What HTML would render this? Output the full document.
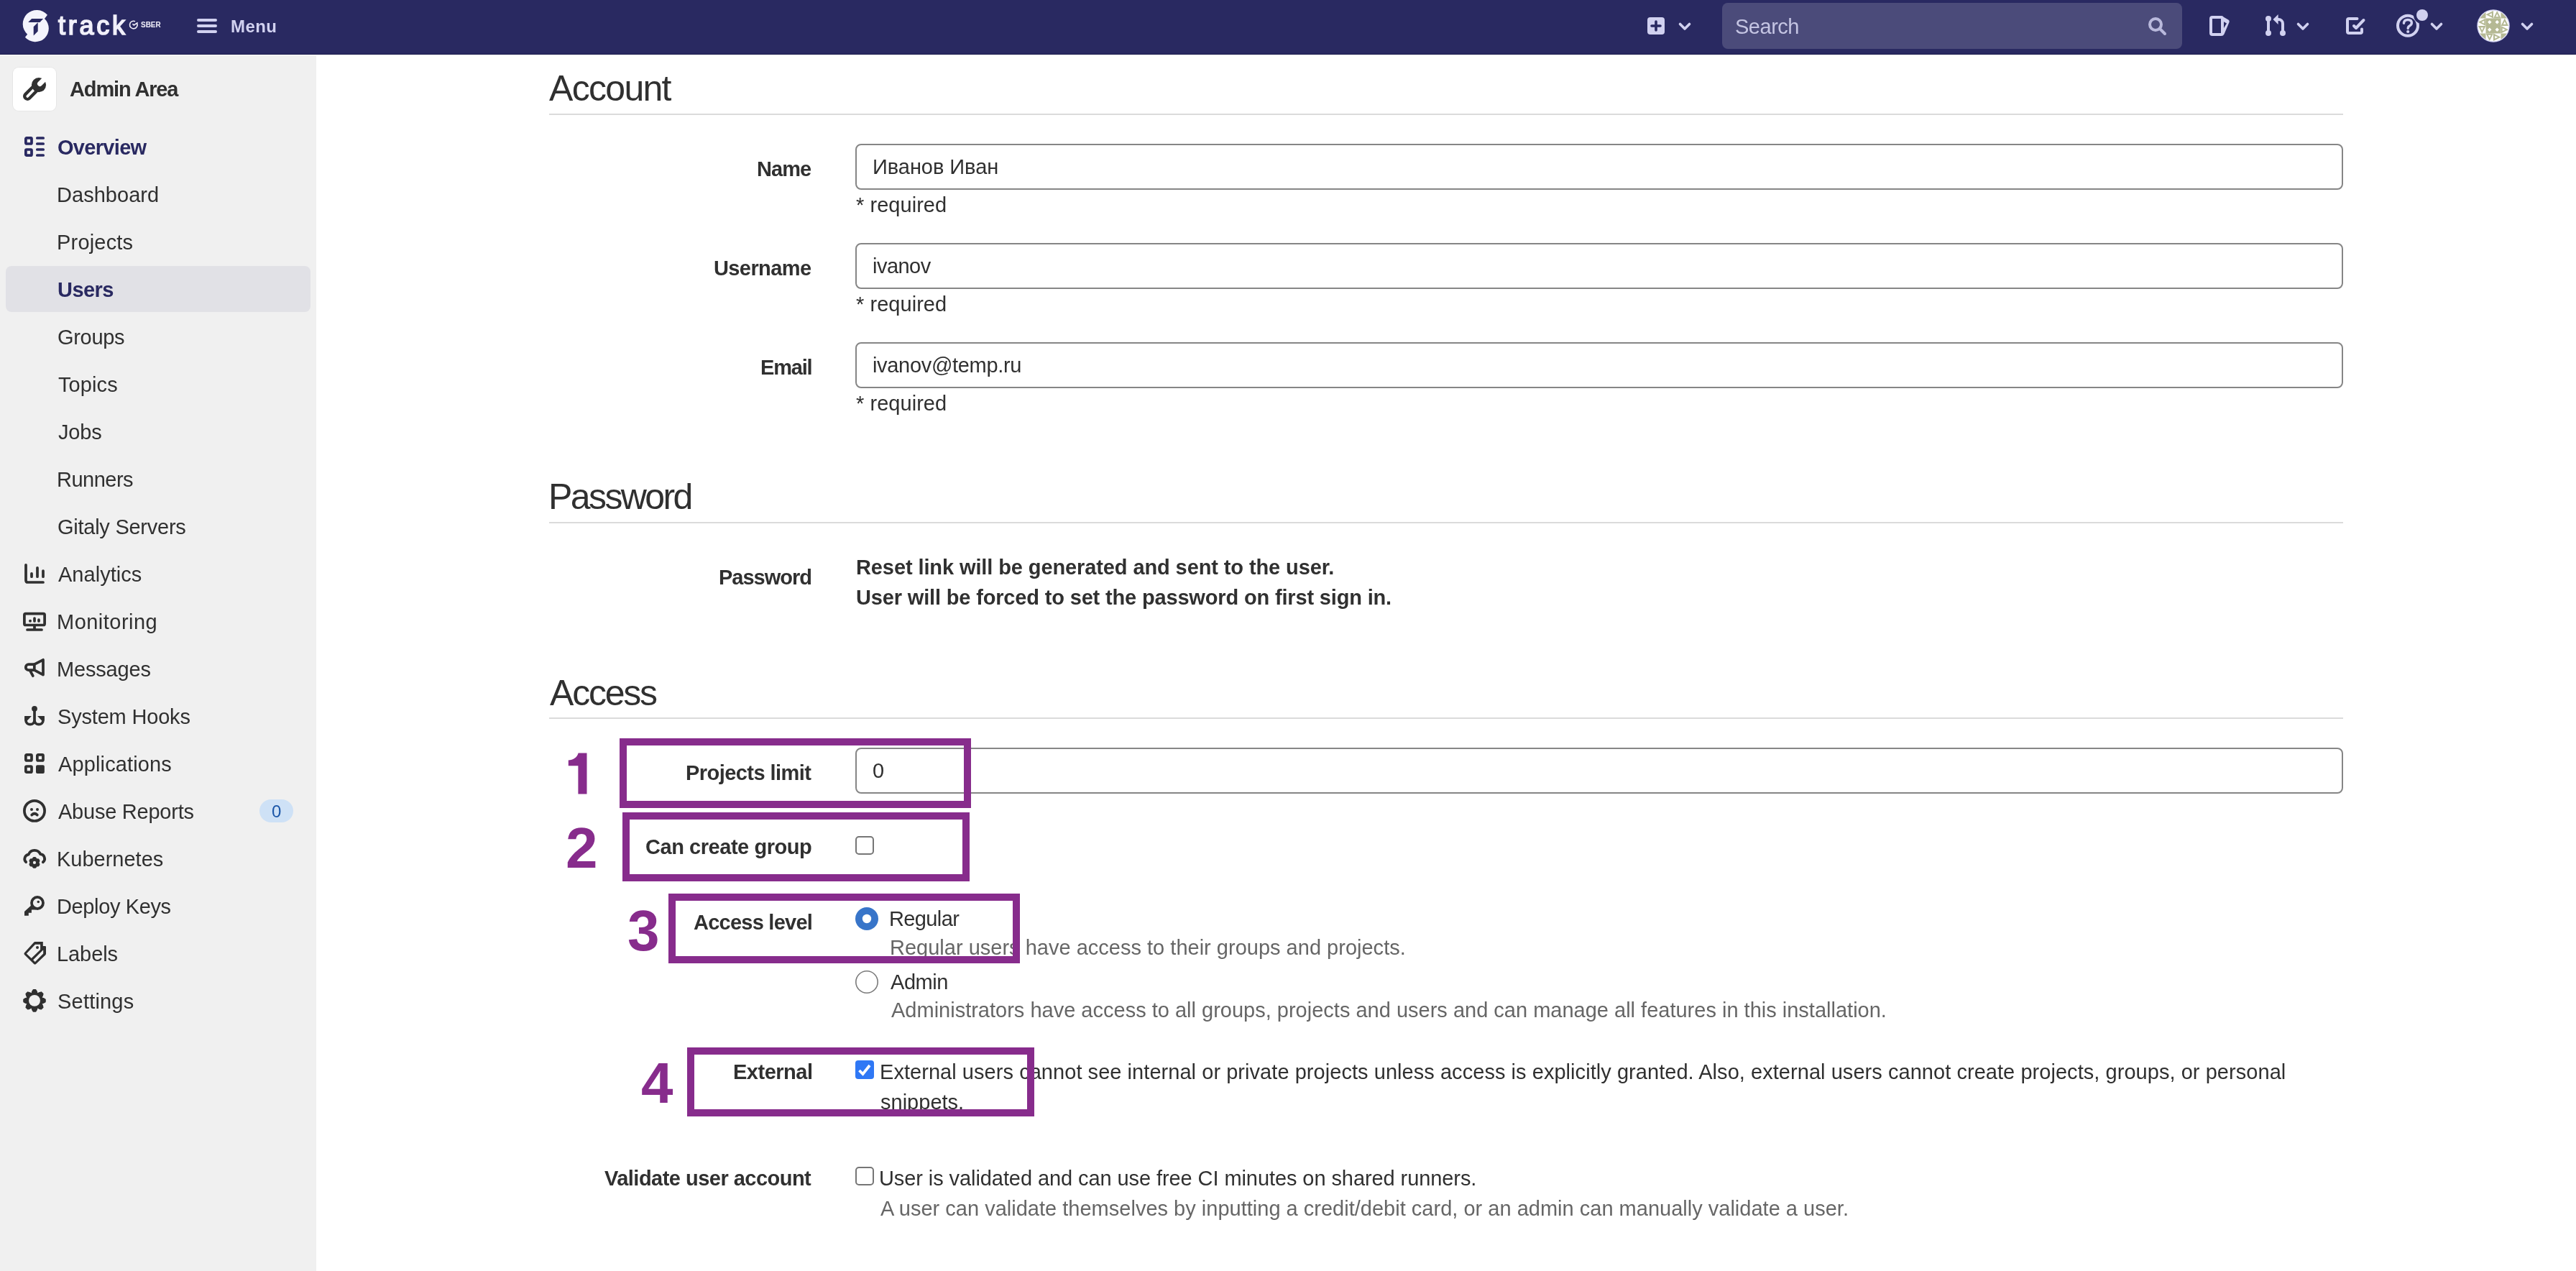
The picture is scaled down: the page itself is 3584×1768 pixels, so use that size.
<!DOCTYPE html>
<html><head><meta charset="utf-8"><title>Admin Area</title>
<style>
html,body{margin:0;padding:0;width:3584px;height:1768px;overflow:hidden;background:#fff;}
body{position:relative;font-family:"Liberation Sans", sans-serif;}
.t{position:absolute;white-space:nowrap;will-change:transform;}
svg{display:block;overflow:visible;}
</style></head><body>
<div style="position:absolute;left:0px;top:0px;width:3584px;height:76px;background:#292961;"></div>
<div style="position:absolute;left:0px;top:75px;width:3584px;height:1px;background:#1b1b4c;"></div>
<svg style="position:absolute;left:26px;top:8px" width="50" height="56" viewBox="0 0 50 56">
<path fill="#f4f4fc" d="M39.96 12.83 A19.4 19.4 0 1 0 12.12 39.72 L8.9 43.7 A18.7 18.7 0 1 0 36.0 18.0 Z"/>
<path fill="#292961" d="M13.2 22.9 L18.1 18.1 H34.1 L29.5 22.9 Z M20.7 29.3 L26.7 23.3 V35.5 L20.7 41.5 Z"/>
</svg>
<div class="t" style="left:80.80px;top:17.62px;font-size:36px;line-height:36px;font-weight:400;color:#f1f0fa;letter-spacing:3.747px;-webkit-text-stroke:1.7px #f1f0fa;">track</div>
<svg style="position:absolute;left:178.5px;top:27.6px" width="13" height="13" viewBox="0 0 13 13"><path d="M11.61 4.3 A5.3 5.3 0 1 1 9.0 1.7" fill="none" stroke="#f1f0fa" stroke-width="1.6"/><path d="M5.4 5.3 L7.4 6.9 L12.6 3.4" fill="none" stroke="#f1f0fa" stroke-width="1.6"/></svg>
<div class="t" style="left:195.60px;top:30.33px;font-size:10px;line-height:10px;font-weight:700;color:#f1f0fa;letter-spacing:-0.021px;">SBER</div>
<div style="position:absolute;left:274px;top:26px;width:28px;height:4px;background:#d1d1f0;border-radius:2px;"></div>
<div style="position:absolute;left:274px;top:34px;width:28px;height:4px;background:#d1d1f0;border-radius:2px;"></div>
<div style="position:absolute;left:274px;top:42px;width:28px;height:4px;background:#d1d1f0;border-radius:2px;"></div>
<div class="t" style="left:320.70px;top:25.48px;font-size:24px;line-height:24px;font-weight:700;color:#d1d1f0;letter-spacing:0.400px;">Menu</div>
<svg style="position:absolute;left:2292px;top:24px" width="24" height="24" viewBox="0 0 24 24"><rect x="0" y="0" width="24" height="24" rx="4" fill="#d1d1f0"/><path d="M12 6 V18 M6 12 H18" stroke="#292961" stroke-width="3.6" stroke-linecap="round"/></svg>
<svg style="position:absolute;left:2335px;top:31px" width="18" height="12" viewBox="0 0 18 12"><path d="M2.5 2.5 L9 9 L15.5 2.5" fill="none" stroke="#d1d1f0" stroke-width="3.6" stroke-linecap="round" stroke-linejoin="round"/></svg>
<div style="position:absolute;left:2396px;top:4px;width:640px;height:64px;background:rgba(255,255,255,0.16);border-radius:8px;"></div>
<div class="t" style="left:2413.90px;top:23.45px;font-size:29px;line-height:29px;font-weight:400;color:#c5c5e3;letter-spacing:-0.491px;">Search</div>
<svg style="position:absolute;left:2988px;top:23px" width="28" height="28" viewBox="0 0 28 28"><circle cx="11" cy="11" r="8" fill="none" stroke="#b9b9dc" stroke-width="4"/><path d="M17 17 L24 24" stroke="#b9b9dc" stroke-width="4" stroke-linecap="round"/></svg>
<svg style="position:absolute;left:3074px;top:22px" width="28" height="28" viewBox="0 0 28 28"><path fill-rule="evenodd" fill="#d1d1f0" d="M4 0 H17 Q18.8 0 19.8 1.8 L26.3 5.6 Q28.5 7 27.3 9.5 L20.5 25.5 Q19.3 28 16.5 28 H4 Q0 28 0 24 V4 Q0 0 4 0 Z M4 4 V24 H16 V4 Z M20 8.3 V17 L24 10.5 Z"/></svg>
<svg style="position:absolute;left:3150px;top:19px" width="32" height="32" viewBox="0 0 32 32"><g fill="#d1d1f0"><circle cx="6" cy="7" r="4"/><circle cx="6" cy="27" r="4"/><rect x="4" y="7" width="4" height="20"/><circle cx="26" cy="27" r="4"/><polygon points="12.5,8 19.6,1 19.6,15"/></g>
<path d="M26 27 V14 A6 6 0 0 0 20 8 H18" fill="none" stroke="#d1d1f0" stroke-width="4"/></svg>
<svg style="position:absolute;left:3195px;top:31px" width="18" height="12" viewBox="0 0 18 12"><path d="M2.5 2.5 L9 9 L15.5 2.5" fill="none" stroke="#d1d1f0" stroke-width="3.6" stroke-linecap="round" stroke-linejoin="round"/></svg>
<svg style="position:absolute;left:3264px;top:24px" width="28" height="25" viewBox="0 0 28 25"><path d="M15.5 2 H4 Q2 2 2 4 V20 Q2 22 4 22 H20 Q22 22 22 20 V16.4" fill="none" stroke="#d1d1f0" stroke-width="4" stroke-linecap="round"/><path d="M11 12 L14 15 L24.5 4" fill="none" stroke="#d1d1f0" stroke-width="4" stroke-linecap="round" stroke-linejoin="round"/></svg>
<svg style="position:absolute;left:3332px;top:11px" width="50" height="44" viewBox="0 0 50 44"><defs><mask id="hm"><rect width="50" height="44" fill="#fff"/><circle cx="38" cy="10" r="12" fill="#000"/></mask></defs>
<g mask="url(#hm)"><circle cx="18" cy="24.8" r="14" fill="none" stroke="#d1d1f0" stroke-width="4"/>
<path d="M12.4 21.2 Q12.9 16.5 18 16.5 Q23.4 16.5 23.4 20.8 Q23.4 23.2 20.8 24.8 Q18.2 26.3 18.2 28.6" fill="none" stroke="#d1d1f0" stroke-width="3.4" stroke-linecap="round"/>
<circle cx="18.2" cy="33" r="2.1" fill="#d1d1f0"/></g>
<circle cx="38" cy="10" r="8" fill="#d1d1f0"/></svg>
<svg style="position:absolute;left:3381px;top:31px" width="18" height="12" viewBox="0 0 18 12"><path d="M2.5 2.5 L9 9 L15.5 2.5" fill="none" stroke="#d1d1f0" stroke-width="3.6" stroke-linecap="round" stroke-linejoin="round"/></svg>
<svg style="position:absolute;left:3446px;top:13px" width="46" height="46" viewBox="0 0 46 46"><defs><clipPath id="av"><circle cx="23" cy="23" r="21.3"/></clipPath></defs>
<circle cx="23" cy="23" r="22.7" fill="#d4d4f2"/>
<g clip-path="url(#av)"><rect width="46" height="46" fill="#fff"/><rect x="2" y="2" width="10.5" height="10.5" fill="#b5b994"/><rect x="33.5" y="2" width="10.5" height="10.5" fill="#b5b994"/><rect x="2" y="33.5" width="10.5" height="10.5" fill="#b5b994"/><rect x="33.5" y="33.5" width="10.5" height="10.5" fill="#b5b994"/><rect x="12.5" y="12.5" width="21" height="21" fill="#b5b994"/><polygon points="12.50,7.25 23.00,2.00 23.00,12.50" fill="#b5b994"/><polygon points="16.84,7.25 20.83,5.25 20.83,9.25" fill="#fff"/><polygon points="28.25,2.00 23.00,12.50 33.50,12.50" fill="#b5b994"/><polygon points="28.25,6.34 26.25,10.33 30.25,10.33" fill="#fff"/><polygon points="2.00,17.75 12.50,12.50 12.50,23.00" fill="#b5b994"/><polygon points="6.34,17.75 10.33,15.75 10.33,19.75" fill="#fff"/><polygon points="38.75,12.50 33.50,23.00 44.00,23.00" fill="#b5b994"/><polygon points="38.75,16.84 36.76,20.83 40.74,20.83" fill="#fff"/><polygon points="7.25,33.50 2.00,23.00 12.50,23.00" fill="#b5b994"/><polygon points="7.25,29.16 5.25,25.17 9.25,25.17" fill="#fff"/><polygon points="44.00,28.25 33.50,23.00 33.50,33.50" fill="#b5b994"/><polygon points="39.66,28.25 35.67,26.25 35.67,30.25" fill="#fff"/><polygon points="17.75,44.00 12.50,33.50 23.00,33.50" fill="#b5b994"/><polygon points="17.75,39.66 15.75,35.67 19.75,35.67" fill="#fff"/><polygon points="33.50,38.75 23.00,33.50 23.00,44.00" fill="#b5b994"/><polygon points="29.16,38.75 25.17,36.76 25.17,40.74" fill="#fff"/><polygon points="3.05,3.05 10.40,3.05 3.05,10.40" fill="#fff"/><polygon points="42.95,3.05 42.95,10.40 35.60,3.05" fill="#fff"/><polygon points="3.05,42.95 3.05,35.60 10.40,42.95" fill="#fff"/><polygon points="42.95,42.95 35.60,42.95 42.95,35.60" fill="#fff"/><rect x="15.85" y="15.85" width="3.8" height="3.8" fill="#fff" transform="rotate(45 17.75 17.75)"/><rect x="26.35" y="15.85" width="3.8" height="3.8" fill="#fff" transform="rotate(45 28.25 17.75)"/><rect x="15.85" y="26.35" width="3.8" height="3.8" fill="#fff" transform="rotate(45 17.75 28.25)"/><rect x="26.35" y="26.35" width="3.8" height="3.8" fill="#fff" transform="rotate(45 28.25 28.25)"/></g></svg>
<svg style="position:absolute;left:3507px;top:31px" width="18" height="12" viewBox="0 0 18 12"><path d="M2.5 2.5 L9 9 L15.5 2.5" fill="none" stroke="#d1d1f0" stroke-width="3.6" stroke-linecap="round" stroke-linejoin="round"/></svg>
<div style="position:absolute;left:0px;top:76px;width:440px;height:1px;background:#fdfdfd;"></div>
<div style="position:absolute;left:0px;top:77px;width:440px;height:1691px;background:#f0f0f0;"></div>
<div style="position:absolute;left:18px;top:94px;width:60px;height:60px;background:#fff;border-radius:8px;box-shadow:0 0 0 1px rgba(0,0,0,0.04);"></div>
<svg style="position:absolute;left:32px;top:108px" width="32" height="32" viewBox="0 0 32 32"><path d="M6.1 25.8 L19 13" stroke="#303030" stroke-width="12.2" stroke-linecap="round"/>
<path d="M6.2 26 L17.8 14" stroke="#fff" stroke-width="3.6" stroke-linecap="round"/>
<circle cx="22" cy="10.1" r="10.1" fill="#303030"/>
<path d="M23.5 8.5 L34 -2" stroke="#fff" stroke-width="7" stroke-linecap="round"/></svg>
<div class="t" style="left:96.60px;top:110.25px;font-size:29px;line-height:29px;font-weight:700;color:#303030;letter-spacing:-1.136px;">Admin Area</div>
<div style="position:absolute;left:8px;top:370px;width:424px;height:64px;background:#e1e1e6;border-radius:8px;"></div>
<div class="t" style="left:80.00px;top:190.75px;font-size:29px;line-height:29px;font-weight:700;color:#292961;letter-spacing:-0.688px;">Overview</div>
<div class="t" style="left:79.00px;top:256.75px;font-size:29px;line-height:29px;font-weight:400;color:#303030;letter-spacing:0.032px;">Dashboard</div>
<div class="t" style="left:79.00px;top:322.75px;font-size:29px;line-height:29px;font-weight:400;color:#303030;letter-spacing:0.192px;">Projects</div>
<div class="t" style="left:80.00px;top:388.75px;font-size:29px;line-height:29px;font-weight:700;color:#292961;letter-spacing:-0.546px;">Users</div>
<div class="t" style="left:80.00px;top:454.75px;font-size:29px;line-height:29px;font-weight:400;color:#303030;letter-spacing:-0.320px;">Groups</div>
<div class="t" style="left:81.00px;top:520.75px;font-size:29px;line-height:29px;font-weight:400;color:#303030;letter-spacing:0.100px;">Topics</div>
<div class="t" style="left:81.00px;top:586.75px;font-size:29px;line-height:29px;font-weight:400;color:#303030;letter-spacing:-0.186px;">Jobs</div>
<div class="t" style="left:79.00px;top:652.75px;font-size:29px;line-height:29px;font-weight:400;color:#303030;letter-spacing:-0.502px;">Runners</div>
<div class="t" style="left:80.00px;top:718.75px;font-size:29px;line-height:29px;font-weight:400;color:#303030;letter-spacing:-0.254px;">Gitaly Servers</div>
<div class="t" style="left:81.00px;top:784.75px;font-size:29px;line-height:29px;font-weight:400;color:#303030;letter-spacing:0.032px;">Analytics</div>
<div class="t" style="left:79.00px;top:850.75px;font-size:29px;line-height:29px;font-weight:400;color:#303030;letter-spacing:0.481px;">Monitoring</div>
<div class="t" style="left:79.00px;top:916.75px;font-size:29px;line-height:29px;font-weight:400;color:#303030;letter-spacing:-0.167px;">Messages</div>
<div class="t" style="left:80.00px;top:982.75px;font-size:29px;line-height:29px;font-weight:400;color:#303030;letter-spacing:-0.186px;">System Hooks</div>
<div class="t" style="left:81.00px;top:1048.75px;font-size:29px;line-height:29px;font-weight:400;color:#303030;letter-spacing:0.130px;">Applications</div>
<div class="t" style="left:81.00px;top:1114.75px;font-size:29px;line-height:29px;font-weight:400;color:#303030;letter-spacing:-0.236px;">Abuse Reports</div>
<div class="t" style="left:79.00px;top:1180.75px;font-size:29px;line-height:29px;font-weight:400;color:#303030;letter-spacing:-0.003px;">Kubernetes</div>
<div class="t" style="left:79.00px;top:1246.75px;font-size:29px;line-height:29px;font-weight:400;color:#303030;letter-spacing:-0.370px;">Deploy Keys</div>
<div class="t" style="left:79.00px;top:1312.75px;font-size:29px;line-height:29px;font-weight:400;color:#303030;letter-spacing:-0.071px;">Labels</div>
<div class="t" style="left:80.00px;top:1378.75px;font-size:29px;line-height:29px;font-weight:400;color:#303030;letter-spacing:0.202px;">Settings</div>
<svg style="position:absolute;left:32px;top:188.0px" width="32" height="32" viewBox="0 0 16 16"><rect x="1.93" y="1.93" width="4.07" height="4.07" rx="0.6" fill="none" stroke="#292961" stroke-width="1.87" stroke-linecap="round" stroke-linejoin="round"/><rect x="1.93" y="10" width="4.07" height="4.07" rx="0.6" fill="none" stroke="#292961" stroke-width="1.87" stroke-linecap="round" stroke-linejoin="round"/>
<path d="M9.9 2 H14.1 M9.9 6 H14.1 M9.9 10 H14.1 M9.9 14 H14.1" fill="none" stroke="#292961" stroke-width="1.87" stroke-linecap="round" stroke-linejoin="round"/></svg>
<svg style="position:absolute;left:32px;top:782.0px" width="32" height="32" viewBox="0 0 16 16"><path d="M2 1.9 V12.6 Q2 14 3.4 14 H14" fill="none" stroke="#303030" stroke-width="1.87" stroke-linecap="round" stroke-linejoin="round"/><path d="M6 7.9 V10.1 M10 3.9 V10.1 M14 6 V10.1" fill="none" stroke="#303030" stroke-width="1.87" stroke-linecap="round" stroke-linejoin="round"/></svg>
<svg style="position:absolute;left:32px;top:848.0px" width="32" height="32" viewBox="0 0 16 16"><rect x="0.95" y="2.85" width="14.1" height="7.9" rx="0.9" fill="none" stroke="#303030" stroke-width="1.87" stroke-linecap="round" stroke-linejoin="round"/><path d="M8 10.8 V13.5 M3 14 H13" fill="none" stroke="#303030" stroke-width="1.87" stroke-linecap="round" stroke-linejoin="round"/>
<circle cx="5" cy="7.9" r="1" fill="#303030"/><path d="M8 6.1 V8 M11 7.1 V8" fill="none" stroke="#303030" stroke-width="1.87" stroke-linecap="round" stroke-linejoin="round"/></svg>
<svg style="position:absolute;left:32px;top:914.0px" width="32" height="32" viewBox="0 0 16 16"><path d="M7.9 5.1 L14 1.9 V12.3 L7.9 9.1 Z" fill="none" stroke="#303030" stroke-width="1.87" stroke-linecap="round" stroke-linejoin="round"/><path d="M7.9 5.1 H3.9 A2 2 0 0 0 3.9 9.1 H7.9" fill="none" stroke="#303030" stroke-width="1.87" stroke-linecap="round" stroke-linejoin="round"/><path d="M5 9.6 L6.9 13.1" fill="none" stroke="#303030" stroke-width="1.87" stroke-linecap="round" stroke-linejoin="round"/></svg>
<svg style="position:absolute;left:32px;top:980.0px" width="32" height="32" viewBox="0 0 16 16"><circle cx="8" cy="2.9" r="1.95" fill="#303030"/><path d="M8 3 V13" fill="none" stroke="#303030" stroke-width="1.87"/>
<path d="M1.97 8.2 V11 A3.02 3.02 0 0 0 8 11 A3.02 3.02 0 0 0 14.03 11 V8.2" fill="none" stroke="#303030" stroke-width="1.87"/>
<path d="M1 8 H5.95 L2.9 11.2 Z M15 8 H10.05 L13.1 11.2 Z" fill="#303030"/></svg>
<svg style="position:absolute;left:32px;top:1046.0px" width="32" height="32" viewBox="0 0 16 16"><rect x="1.93" y="1.93" width="4.07" height="4.07" rx="0.6" fill="none" stroke="#303030" stroke-width="1.87" stroke-linecap="round" stroke-linejoin="round"/><rect x="9.93" y="1.93" width="4.07" height="4.07" rx="0.6" fill="none" stroke="#303030" stroke-width="1.87" stroke-linecap="round" stroke-linejoin="round"/>
<rect x="1.93" y="10" width="4.07" height="4.07" rx="0.6" fill="none" stroke="#303030" stroke-width="1.87" stroke-linecap="round" stroke-linejoin="round"/><rect x="9" y="9.07" width="5.93" height="5.93" rx="1" fill="#303030"/></svg>
<svg style="position:absolute;left:32px;top:1112.0px" width="32" height="32" viewBox="0 0 16 16"><circle cx="8" cy="7.95" r="7.05" fill="none" stroke="#303030" stroke-width="1.87" stroke-linecap="round" stroke-linejoin="round"/><circle cx="6" cy="7" r="1" fill="#303030"/><circle cx="10" cy="7" r="1" fill="#303030"/>
<path d="M6.1 10.8 Q8 8.9 9.9 10.8" fill="none" stroke="#303030" stroke-width="1.87" stroke-linecap="round" stroke-linejoin="round"/></svg>
<svg style="position:absolute;left:32px;top:1178.0px" width="32" height="32" viewBox="0 0 16 16"><path d="M2.1 10.6 A3.1 3.1 0 0 1 3.9 5.3 A4.4 4.4 0 0 1 12.1 5.1 A3.1 3.1 0 0 1 13.9 10.6" fill="none" stroke="#303030" stroke-width="1.87" stroke-linecap="round" stroke-linejoin="round"/><circle cx="7.98" cy="10.95" r="2.75" fill="#303030"/><path d="M6.780 8.950 L6.930 8.050 L7.480 7.500 L8.480 7.500 L9.030 8.050 L9.180 8.950 Z M9.112 8.911 L9.966 8.591 L10.718 8.792 L11.218 9.658 L11.016 10.409 L10.312 10.989 Z M10.312 10.911 L11.016 11.491 L11.218 12.242 L10.718 13.108 L9.966 13.309 L9.112 12.989 Z M9.180 12.950 L9.030 13.850 L8.480 14.400 L7.480 14.400 L6.930 13.850 L6.780 12.950 Z M6.848 12.989 L5.994 13.309 L5.242 13.108 L4.742 12.242 L4.944 11.491 L5.648 10.911 Z M5.648 10.989 L4.944 10.409 L4.742 9.658 L5.242 8.792 L5.994 8.591 L6.848 8.911 Z" fill="#303030" stroke="#303030" stroke-width="1" stroke-linejoin="round"/><circle cx="7.98" cy="10.95" r="1.05" fill="#f0f0f0"/></svg>
<svg style="position:absolute;left:32px;top:1244.0px" width="32" height="32" viewBox="0 0 16 16"><circle cx="10" cy="6" r="4.02" fill="none" stroke="#303030" stroke-width="1.87" stroke-linecap="round" stroke-linejoin="round"/><circle cx="10.65" cy="5.25" r="0.9" fill="#303030"/>
<path fill="#303030" d="M6.2 7.2 L1 12 V14.9 H3.9 V12.9 H5.95 V10.8 H9 L8 9 Z"/></svg>
<svg style="position:absolute;left:32px;top:1310.0px" width="32" height="32" viewBox="0 0 16 16"><path fill="#303030" fill-rule="evenodd" d="M8.3 0 H13.9 V3 H15.4 Q16 3 16 3.6 V8.2 Q16 8.8 15.6 9.2 L9 15.5 Q8.3 16.1 7.6 15.5 L1 9 Q0.4 8.3 1 7.6 L7.6 0.4 Q8 0 8.3 0 Z M8.5 1.85 L2.45 8.3 L5.85 11.55 L12.05 5.45 V1.85 Z M13.85 5.9 L7.05 12.65 L8.4 14 L14.1 8.3 V5.9 Z"/>
<circle cx="10" cy="3.97" r="1" fill="#303030"/></svg>
<svg style="position:absolute;left:32px;top:1376.0px" width="32" height="32" viewBox="0 0 16 16"><circle cx="8" cy="7.95" r="5.85" fill="#303030"/><path d="M6.450 2.950 L6.600 1.850 L7.280 0.650 L8.720 0.650 L9.400 1.850 L9.550 2.950 Z M10.440 3.318 L11.323 2.647 L12.653 2.279 L13.671 3.297 L13.303 4.627 L12.632 5.510 Z M13.000 6.400 L14.100 6.550 L15.300 7.230 L15.300 8.670 L14.100 9.350 L13.000 9.500 Z M12.632 10.390 L13.303 11.273 L13.671 12.603 L12.653 13.621 L11.323 13.253 L10.440 12.582 Z M9.550 12.950 L9.400 14.050 L8.720 15.250 L7.280 15.250 L6.600 14.050 L6.450 12.950 Z M5.560 12.582 L4.677 13.253 L3.347 13.621 L2.329 12.603 L2.697 11.273 L3.368 10.390 Z M3.000 9.500 L1.900 9.350 L0.700 8.670 L0.700 7.230 L1.900 6.550 L3.000 6.400 Z M3.368 5.510 L2.697 4.627 L2.329 3.297 L3.347 2.279 L4.677 2.647 L5.560 3.318 Z" fill="#303030" stroke="#303030" stroke-width="1.2" stroke-linejoin="round"/><circle cx="8" cy="7.95" r="3.98" fill="#f0f0f0"/></svg>
<div style="position:absolute;left:361px;top:1112px;width:47px;height:32px;background:#cee1f6;border-radius:16px;"></div>
<div class="t" style="left:378.40px;top:1116.88px;font-size:24px;line-height:24px;font-weight:400;color:#1c57a8;letter-spacing:0.000px;">0</div>
<div class="t" style="left:764.40px;top:98.16px;font-size:50px;line-height:50px;font-weight:400;color:#303030;letter-spacing:-1.695px;">Account</div>
<div style="position:absolute;left:764px;top:158px;width:2496px;height:2px;background:#dbdbdb;"></div>
<div class="t" style="left:1052.90px;top:221.15px;font-size:29px;line-height:29px;font-weight:700;color:#303030;letter-spacing:-0.919px;">Name</div>
<div style="position:absolute;left:1190px;top:200px;width:2070px;height:64px;box-sizing:border-box;border:2px solid #868686;border-radius:8px;background:#fff;"></div>
<div class="t" style="left:1213.60px;top:218.15px;font-size:29px;line-height:29px;font-weight:400;color:#303030;letter-spacing:-0.051px;">Иванов Иван</div>
<div class="t" style="left:1191.40px;top:270.95px;font-size:29px;line-height:29px;font-weight:400;color:#303030;letter-spacing:0.043px;">* required</div>
<div class="t" style="left:993.10px;top:359.15px;font-size:29px;line-height:29px;font-weight:700;color:#303030;letter-spacing:-0.602px;">Username</div>
<div style="position:absolute;left:1190px;top:338px;width:2070px;height:64px;box-sizing:border-box;border:2px solid #868686;border-radius:8px;background:#fff;"></div>
<div class="t" style="left:1214.30px;top:356.15px;font-size:29px;line-height:29px;font-weight:400;color:#303030;letter-spacing:-0.526px;">ivanov</div>
<div class="t" style="left:1191.40px;top:408.95px;font-size:29px;line-height:29px;font-weight:400;color:#303030;letter-spacing:0.043px;">* required</div>
<div class="t" style="left:1058.40px;top:497.15px;font-size:29px;line-height:29px;font-weight:700;color:#303030;letter-spacing:-1.178px;">Email</div>
<div style="position:absolute;left:1190px;top:476px;width:2070px;height:64px;box-sizing:border-box;border:2px solid #868686;border-radius:8px;background:#fff;"></div>
<div class="t" style="left:1214.30px;top:494.15px;font-size:29px;line-height:29px;font-weight:400;color:#303030;letter-spacing:-0.319px;">ivanov@temp.ru</div>
<div class="t" style="left:1191.40px;top:546.95px;font-size:29px;line-height:29px;font-weight:400;color:#303030;letter-spacing:0.043px;">* required</div>
<div class="t" style="left:762.70px;top:666.26px;font-size:50px;line-height:50px;font-weight:400;color:#303030;letter-spacing:-2.589px;">Password</div>
<div style="position:absolute;left:764px;top:726px;width:2496px;height:2px;background:#dbdbdb;"></div>
<div class="t" style="left:999.90px;top:788.85px;font-size:29px;line-height:29px;font-weight:700;color:#303030;letter-spacing:-0.998px;">Password</div>
<div class="t" style="left:1190.60px;top:775.25px;font-size:29px;line-height:29px;font-weight:700;color:#303030;letter-spacing:-0.103px;">Reset link will be generated and sent to the user.</div>
<div class="t" style="left:1190.60px;top:817.25px;font-size:29px;line-height:29px;font-weight:700;color:#303030;letter-spacing:-0.160px;">User will be forced to set the password on first sign in.</div>
<div class="t" style="left:764.50px;top:938.66px;font-size:50px;line-height:50px;font-weight:400;color:#303030;letter-spacing:-2.211px;">Access</div>
<div style="position:absolute;left:764px;top:998px;width:2496px;height:2px;background:#dbdbdb;"></div>
<div class="t" style="left:953.70px;top:1061.05px;font-size:29px;line-height:29px;font-weight:700;color:#303030;letter-spacing:-0.551px;">Projects limit</div>
<div style="position:absolute;left:1190px;top:1040px;width:2070px;height:64px;box-sizing:border-box;border:2px solid #868686;border-radius:8px;background:#fff;"></div>
<div class="t" style="left:1214.00px;top:1058.25px;font-size:29px;line-height:29px;font-weight:400;color:#303030;letter-spacing:0.000px;">0</div>
<div class="t" style="left:898.00px;top:1164.25px;font-size:29px;line-height:29px;font-weight:700;color:#303030;letter-spacing:-0.452px;">Can create group</div>
<svg style="position:absolute;left:1190px;top:1163px" width="26" height="26" viewBox="0 0 26 26"><rect x="1" y="1" width="24" height="24" rx="4" fill="#fff" stroke="#767676" stroke-width="2"/></svg>
<div class="t" style="left:965.00px;top:1269.15px;font-size:29px;line-height:29px;font-weight:700;color:#303030;letter-spacing:-0.753px;">Access level</div>
<svg style="position:absolute;left:1190px;top:1262px" width="32" height="32" viewBox="0 0 32 32"><circle cx="16" cy="16" r="16" fill="#3875c9"/><circle cx="16" cy="16" r="6.2" fill="#fff"/></svg>
<div class="t" style="left:1237.40px;top:1264.05px;font-size:29px;line-height:29px;font-weight:400;color:#303030;letter-spacing:-0.617px;">Regular</div>
<div class="t" style="left:1237.90px;top:1304.15px;font-size:29px;line-height:29px;font-weight:400;color:#666666;letter-spacing:0.008px;">Regular users have access to their groups and projects.</div>
<svg style="position:absolute;left:1190px;top:1350px" width="32" height="32" viewBox="0 0 32 32"><circle cx="16" cy="16" r="15.2" fill="#fff" stroke="#7a7a7a" stroke-width="1.6"/></svg>
<div class="t" style="left:1238.70px;top:1352.35px;font-size:29px;line-height:29px;font-weight:400;color:#303030;letter-spacing:-0.443px;">Admin</div>
<div class="t" style="left:1239.50px;top:1391.45px;font-size:29px;line-height:29px;font-weight:400;color:#666666;letter-spacing:0.002px;">Administrators have access to all groups, projects and users and can manage all features in this installation.</div>
<div class="t" style="left:1019.70px;top:1477.25px;font-size:29px;line-height:29px;font-weight:700;color:#303030;letter-spacing:-0.498px;">External</div>
<svg style="position:absolute;left:1190px;top:1475px" width="26" height="26" viewBox="0 0 26 26"><rect x="0" y="0" width="26" height="26" rx="4" fill="#2f78f5"/><path d="M5.5 14 L10.5 19 L20 7" fill="none" stroke="#fff" stroke-width="3.8"/></svg>
<div class="t" style="left:1224.00px;top:1477.25px;font-size:29px;line-height:29px;font-weight:400;color:#303030;letter-spacing:0.048px;">External users cannot see internal or private projects unless access is explicitly granted. Also, external users cannot create projects, groups, or personal</div>
<div class="t" style="left:1225.30px;top:1518.65px;font-size:29px;line-height:29px;font-weight:400;color:#303030;letter-spacing:0.011px;">snippets.</div>
<div class="t" style="left:840.50px;top:1624.75px;font-size:29px;line-height:29px;font-weight:700;color:#303030;letter-spacing:-0.521px;">Validate user account</div>
<svg style="position:absolute;left:1190px;top:1623px" width="26" height="26" viewBox="0 0 26 26"><rect x="1" y="1" width="24" height="24" rx="4" fill="#fff" stroke="#767676" stroke-width="2"/></svg>
<div class="t" style="left:1223.30px;top:1625.05px;font-size:29px;line-height:29px;font-weight:400;color:#303030;letter-spacing:-0.083px;">User is validated and can use free CI minutes on shared runners.</div>
<div class="t" style="left:1225.20px;top:1666.65px;font-size:29px;line-height:29px;font-weight:400;color:#666666;letter-spacing:0.009px;">A user can validate themselves by inputting a credit/debit card, or an admin can manually validate a user.</div>
<div style="position:absolute;left:862px;top:1027px;width:489px;height:97px;box-sizing:border-box;border:10px solid #872c8c;"></div>
<div style="position:absolute;left:866px;top:1130px;width:483px;height:96px;box-sizing:border-box;border:10px solid #872c8c;"></div>
<div style="position:absolute;left:930px;top:1243px;width:489px;height:97px;box-sizing:border-box;border:10px solid #872c8c;"></div>
<div style="position:absolute;left:956px;top:1457px;width:483px;height:96px;box-sizing:border-box;border:10px solid #872c8c;"></div>
<svg style="position:absolute;left:780px;top:1040px" width="50" height="70" viewBox="0 0 50 70"><path fill="#872c8c" d="M24.6 7.6 H36.5 V64.5 H24.4 V25.3 H10.8 V17.5 C17 17.5 23 14 24.6 7.6 Z"/></svg>
<div class="t" style="left:786.60px;top:1139.86px;font-size:80px;line-height:80px;font-weight:700;color:#872c8c;letter-spacing:0.000px;">2</div>
<div class="t" style="left:872.80px;top:1254.56px;font-size:80px;line-height:80px;font-weight:700;color:#872c8c;letter-spacing:0.000px;">3</div>
<div class="t" style="left:891.60px;top:1466.56px;font-size:80px;line-height:80px;font-weight:700;color:#872c8c;letter-spacing:0.000px;">4</div>
</body></html>
